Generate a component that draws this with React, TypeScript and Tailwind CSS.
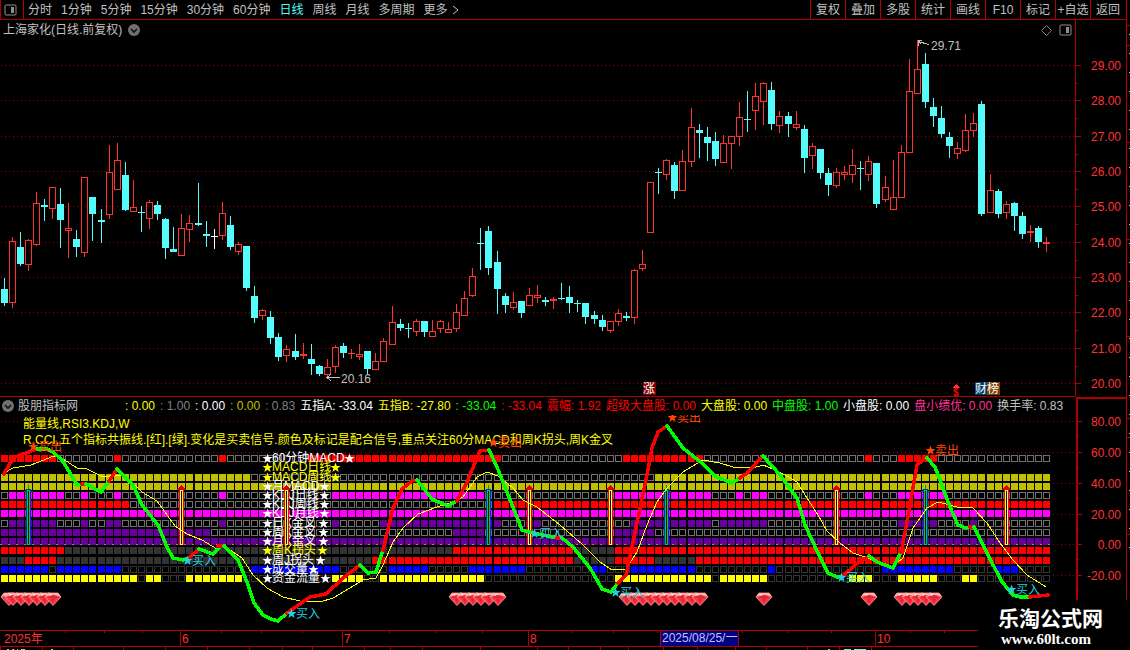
import { useState } from "react";

type Candle = [high: number, top: number, bottom: number, low: number, kind: "u" | "d" | "w"];
type Range = [from: number, to: number];
type Point = [x: number, y: number];

const LINE = "#b00000";
const UP = "#ff3232";
const DOWN = "#54fcfc";
const COUNT = 130;

const periods = ["分时", "1分钟", "5分钟", "15分钟", "30分钟", "60分钟", "日线", "周线", "月线", "多周期"];
const tools = ["复权", "叠加", "多股", "统计", "画线", "F10", "标记", "+自选", "返回"];

const candles: Candle[] = [
  [278, 289, 303, 306, "d"], [237, 241, 303, 308, "u"], [232, 247, 264, 266, "d"], [239, 240, 265, 271, "u"],
  [192, 203, 245, 246, "u"], [199, 205, 207, 221, "d"], [187, 187, 209, 219, "u"], [188, 204, 220, 248, "d"],
  [203, 228, 231, 258, "u"], [230, 239, 247, 257, "d"], [177, 177, 253, 257, "u"], [197, 197, 214, 241, "d"],
  [209, 220, 222, 243, "d"], [145, 172, 215, 219, "u"], [143, 160, 190, 190, "u"], [162, 175, 210, 211, "d"],
  [180, 207, 212, 212, "u"], [206, 212, 213, 232, "d"], [200, 202, 219, 229, "u"], [201, 205, 214, 220, "d"],
  [218, 219, 248, 259, "d"], [227, 249, 252, 252, "d"], [214, 228, 256, 256, "u"], [215, 223, 230, 242, "u"],
  [183, 223, 225, 226, "d"], [221, 234, 236, 247, "d"], [229, 236, 237, 249, "w"], [202, 213, 236, 240, "u"],
  [216, 225, 247, 250, "d"], [242, 244, 252, 255, "u"], [246, 246, 288, 291, "d"], [286, 296, 318, 323, "d"],
  [309, 310, 316, 320, "u"], [311, 317, 338, 344, "d"], [333, 337, 357, 361, "d"], [345, 349, 356, 362, "u"],
  [334, 351, 357, 360, "d"], [343, 354, 356, 359, "u"], [344, 359, 364, 375, "d"], [365, 366, 374, 376, "d"],
  [359, 367, 375, 376, "u"], [345, 347, 367, 373, "u"], [343, 346, 353, 358, "d"], [349, 353, 354, 359, "u"],
  [344, 354, 357, 360, "u"], [351, 351, 369, 374, "d"], [353, 361, 370, 370, "u"], [338, 341, 362, 362, "u"],
  [306, 322, 345, 345, "u"], [319, 324, 328, 331, "d"], [323, 328, 329, 338, "d"], [319, 321, 332, 336, "u"],
  [321, 321, 332, 337, "d"], [320, 331, 337, 337, "u"], [320, 321, 329, 333, "u"], [322, 329, 333, 333, "u"],
  [304, 312, 329, 332, "u"], [291, 298, 316, 316, "u"], [268, 276, 296, 297, "u"], [228, 243, 244, 270, "d"],
  [226, 231, 268, 275, "d"], [251, 262, 289, 314, "d"], [293, 296, 305, 313, "d"], [292, 302, 308, 310, "u"],
  [301, 301, 313, 318, "d"], [288, 295, 306, 306, "u"], [285, 295, 298, 303, "u"], [297, 300, 302, 306, "d"],
  [297, 299, 301, 309, "u"], [283, 298, 299, 300, "d"], [286, 297, 303, 313, "d"], [300, 303, 304, 312, "d"],
  [303, 303, 317, 324, "d"], [311, 315, 319, 324, "d"], [315, 320, 327, 331, "d"], [321, 321, 331, 333, "u"],
  [309, 313, 322, 326, "u"], [312, 316, 318, 321, "d"], [269, 270, 318, 324, "u"], [250, 264, 269, 271, "u"],
  [182, 182, 233, 233, "u"], [168, 172, 173, 194, "d"], [159, 160, 175, 180, "u"], [162, 165, 191, 199, "d"],
  [150, 161, 191, 191, "u"], [108, 127, 162, 167, "u"], [124, 130, 133, 158, "d"], [127, 137, 143, 161, "d"],
  [132, 141, 159, 166, "d"], [135, 143, 163, 163, "u"], [136, 136, 144, 169, "u"], [102, 117, 137, 146, "u"],
  [91, 119, 120, 132, "d"], [83, 96, 111, 130, "u"], [82, 83, 102, 125, "u"], [82, 90, 124, 130, "d"],
  [111, 116, 126, 133, "u"], [112, 116, 124, 137, "d"], [111, 124, 128, 130, "u"], [125, 129, 158, 173, "d"],
  [143, 146, 156, 169, "u"], [149, 149, 173, 179, "d"], [168, 173, 185, 196, "d"], [168, 172, 186, 188, "u"],
  [166, 172, 175, 180, "u"], [149, 165, 175, 183, "u"], [161, 168, 169, 190, "d"], [156, 161, 175, 181, "u"],
  [163, 163, 204, 208, "d"], [176, 187, 200, 202, "u"], [160, 197, 210, 210, "u"], [145, 152, 198, 198, "u"],
  [59, 91, 153, 153, "u"], [40, 69, 94, 94, "u"], [53, 64, 102, 108, "d"], [98, 107, 116, 127, "d"],
  [106, 118, 134, 138, "d"], [132, 137, 146, 158, "d"], [142, 148, 154, 159, "u"], [114, 130, 151, 152, "u"],
  [113, 123, 131, 137, "u"], [101, 104, 214, 216, "d"], [174, 190, 213, 213, "u"], [189, 191, 214, 218, "d"],
  [201, 204, 213, 219, "u"], [202, 203, 216, 231, "d"], [212, 216, 234, 239, "d"], [225, 231, 233, 242, "u"],
  [226, 228, 242, 248, "d"], [237, 242, 244, 252, "u"]
];

const priceTicks = [
  { y: 65, label: "29.00" },
  { y: 100, label: "28.00" },
  { y: 136, label: "27.00" },
  { y: 171, label: "26.00" },
  { y: 206, label: "25.00" },
  { y: 242, label: "24.00" },
  { y: 277, label: "23.00" },
  { y: 312, label: "22.00" },
  { y: 348, label: "21.00" },
  { y: 383, label: "20.00" }
];

const indexTicks = [
  { y: 421, label: "80.00" },
  { y: 452, label: "60.00" },
  { y: 483, label: "40.00" },
  { y: 514, label: "20.00" },
  { y: 544, label: "0.00" },
  { y: 575, label: "-20.00" }
];

const readings = [
  { text: ": 0.00", color: "text-[#ffff00]" },
  { text: ": 1.00", color: "text-[#808080]" },
  { text: ": 0.00", color: "text-white" },
  { text: ": 0.00", color: "text-[#c0c000]" },
  { text: ": 0.83", color: "text-[#808080]" },
  { text: "五指A: -33.04", color: "text-white" },
  { text: "五指B: -27.80", color: "text-[#ffff00]" },
  { text: ": -33.04", color: "text-[#00ff00]" },
  { text: ": -33.04", color: "text-[#ff0000]" },
  { text: "震幅: 1.92", color: "text-[#ff0000]" },
  { text: "超级大盘股: 0.00", color: "text-[#ff0000]" },
  { text: "大盘股: 0.00", color: "text-[#ffff00]" },
  { text: "中盘股: 1.00", color: "text-[#00ff00]" },
  { text: "小盘股: 0.00", color: "text-white" },
  { text: "盘小绩优: 0.00", color: "text-[#ff3399]" },
  { text: "换手率: 0.83", color: "text-[#c0c0c0]" }
];

const OFF = "#707070";
const DIM = "#333333";

// off: outline colour of an empty cell, or a fill when solid is set
const signalRows: { y: number; on: string; off: string; solid?: boolean; ranges: Range[] }[] = [
  { y: 455, on: "#ff0000", off: OFF, ranges: [[0, 6], [14, 14], [27, 27], [38, 61], [77, 86], [107, 107], [111, 115]] },
  { y: 474, on: "#c0c000", off: OFF, ranges: [[0, 30], [81, 129]] },
  { y: 483, on: "#c0c000", off: OFF, ranges: [[0, 129]] },
  { y: 492, on: "#ff00ff", off: OFF, ranges: [[1, 7], [10, 10], [14, 14], [27, 27], [41, 59], [76, 87], [91, 91], [93, 94], [107, 107], [111, 116]] },
  { y: 501, on: "#ff0000", off: OFF, ranges: [[0, 15], [61, 129]] },
  { y: 510, on: "#ff00ff", off: OFF, ranges: [[0, 129]] },
  { y: 520, on: "#660099", off: OFF, ranges: [[1, 6], [10, 10], [13, 14], [27, 27], [41, 41], [47, 61], [65, 66], [78, 87], [89, 94], [111, 115], [120, 120]] },
  { y: 529, on: "#660099", off: OFF, ranges: [[0, 25], [56, 59], [76, 80]] },
  { y: 538, on: "#660099", off: OFF, ranges: [[0, 129]] },
  { y: 547, on: "#ff0000", off: DIM, solid: true, ranges: [[0, 7], [56, 70], [76, 129]] },
  { y: 557, on: "#ff0000", off: DIM, solid: true, ranges: [[3, 6], [46, 70], [76, 80], [86, 129]] },
  { y: 566, on: "#0000ff", off: DIM, ranges: [[0, 5], [7, 14], [31, 41], [48, 52], [58, 64], [73, 74], [78, 85], [95, 95], [109, 117], [123, 125]] },
  { y: 575, on: "#ffff00", off: DIM, ranges: [[0, 16], [18, 19], [23, 29], [41, 44], [47, 59], [76, 87], [89, 94], [105, 107], [111, 115], [119, 120]] }
];

const rowLabels = [
  { y: 458, text: "60分钟MACD", end: 349, color: "#ffffff" },
  { y: 467, text: "MACD日线", end: 335, color: "#ffff00" },
  { y: 477, text: "MACD周线", end: 335, color: "#ffff00" },
  { y: 486, text: "月MACD", end: 324, color: "#ffffff" },
  { y: 495, text: "KDJ日线", end: 324, color: "#ffffff" },
  { y: 504, text: "KDJ周线", end: 324, color: "#ffffff" },
  { y: 513, text: "KDJ月线", end: 324, color: "#ffffff" },
  { y: 523, text: "日K金叉", end: 323, color: "#ffffff" },
  { y: 532, text: "周K金叉", end: 323, color: "#ffffff" },
  { y: 541, text: "月K金叉", end: 323, color: "#ffffff" },
  { y: 550, text: "周K拐头", end: 322, color: "#ffff00" },
  { y: 560, text: "周J拐头", end: 320, color: "#ffffff" },
  { y: 569, text: "成交量", end: 313, color: "#ffffff" },
  { y: 578, text: "资金流量", end: 325, color: "#ffffff" }
];

const slowLine: Point[] = [
  [4, 473], [13, 468], [31, 465], [54, 456], [63, 459], [77, 468], [85, 468], [103, 477], [117, 475], [127, 477],
  [142, 492], [157, 501], [175, 526], [187, 534], [202, 540], [217, 549], [225, 547], [233, 552], [242, 558],
  [253, 575], [267, 588], [283, 597], [300, 601], [320, 602], [333, 598], [350, 588], [363, 580], [376, 578],
  [383, 565], [393, 542], [403, 528], [418, 514], [437, 507], [450, 503], [463, 497], [477, 477], [487, 472],
  [498, 476], [513, 488], [523, 500], [537, 507], [560, 525], [583, 545], [600, 562], [612, 570], [626, 569],
  [637, 552], [647, 525], [657, 502], [667, 488], [683, 472], [703, 460], [720, 463], [733, 467], [753, 468],
  [763, 465], [773, 469], [787, 476], [797, 482], [807, 498], [818, 515], [827, 531], [840, 543], [853, 553],
  [865, 557], [876, 561], [892, 567], [903, 558], [913, 528], [927, 508], [938, 502], [957, 507], [973, 508],
  [987, 523], [1000, 543], [1013, 560], [1027, 575], [1046, 587]
];

const R = "#ff0000";
const G = "#00ff00";

const energyLine: { color: string; points: Point[] }[] = [
  { color: R, points: [[4, 474], [10, 463], [15, 457], [37, 449]] },
  { color: G, points: [[37, 449], [47, 449], [53, 452], [62, 460], [70, 473], [77, 485], [82, 484]] },
  { color: R, points: [[82, 484], [86, 484]] },
  { color: G, points: [[86, 484], [101, 492], [109, 481]] },
  { color: R, points: [[109, 481], [117, 469]] },
  { color: G, points: [[117, 469], [133, 485], [142, 505], [158, 525], [167, 547], [173, 558], [183, 560], [189, 558]] },
  { color: R, points: [[189, 558], [199, 549]] },
  { color: G, points: [[199, 549], [213, 554], [220, 547]] },
  { color: R, points: [[218, 546], [224, 546]] },
  { color: G, points: [[224, 546], [238, 560], [247, 582], [254, 603], [263, 615], [271, 619], [278, 621], [287, 613]] },
  { color: R, points: [[287, 613], [310, 597], [326, 594], [343, 578], [360, 565]] },
  { color: G, points: [[360, 565], [368, 573], [376, 572], [383, 550]] },
  { color: R, points: [[383, 550], [393, 508], [402, 489], [412, 481], [417, 480]] },
  { color: G, points: [[417, 480], [432, 499], [448, 506], [457, 501]] },
  { color: R, points: [[457, 501], [467, 482], [480, 451], [489, 450]] },
  { color: G, points: [[489, 450], [497, 467], [505, 487], [522, 530], [533, 533], [557, 538]] },
  { color: R, points: [[557, 538], [562, 538]] },
  { color: G, points: [[562, 538], [573, 547], [590, 568], [602, 589], [611, 592], [618, 583]] },
  { color: R, points: [[618, 583], [626, 575], [633, 542], [647, 475], [652, 448], [658, 432], [667, 426]] },
  { color: G, points: [[667, 426], [683, 448], [703, 464], [715, 476], [732, 483], [740, 478]] },
  { color: R, points: [[740, 478], [747, 473], [763, 456]] },
  { color: G, points: [[763, 456], [780, 475], [797, 498], [805, 525], [818, 553], [828, 573], [837, 577], [843, 576]] },
  { color: R, points: [[843, 576], [855, 565], [869, 556]] },
  { color: G, points: [[869, 556], [877, 562], [893, 568], [901, 552]] },
  { color: R, points: [[901, 552], [907, 522], [917, 465], [923, 460], [927, 458]] },
  { color: G, points: [[927, 458], [935, 467], [950, 507], [958, 525], [966, 528], [970, 527]] },
  { color: R, points: [[970, 527], [974, 527]] },
  { color: G, points: [[974, 527], [987, 553], [1002, 582], [1013, 595], [1020, 597], [1030, 597]] },
  { color: R, points: [[1030, 597], [1048, 595]] }
];

const buyArrows = [181, 286, 529, 610, 836, 1006];
const sellArrows = [28, 488, 666, 925];
const gemSlots = [1, 2, 3, 4, 5, 6, 56, 57, 58, 59, 60, 61, 77, 78, 79, 80, 81, 82, 83, 84, 85, 86, 94, 107, 111, 112, 113, 114, 115];

const sellMarks: Point[] = [[33, 446], [493, 442], [672, 417], [930, 450]];
const buyMarks: Point[] = [[187, 560], [291, 613], [534, 533], [615, 592], [841, 577], [1011, 589]];

const months = [
  { x: 180, label: "6" },
  { x: 342, label: "7" },
  { x: 528, label: "8" },
  { x: 875, label: "10" }
];
const weekTicks = [65, 104, 142, 221, 261, 302, 389, 435, 482, 571, 613, 657, 742, 787, 831, 910, 944];
const footTicks = [0, 42, 73, 123, 165, 207, 249, 282, 312, 364, 390, 422, 480, 537, 568, 600, 628, 663, 697, 735, 766, 807, 839, 871];

function slotX(i: number) {
  return Math.floor(4.07 + i * 8.082);
}

function toPath(points: Point[]) {
  return points.map(([x, y]) => `${x},${y}`).join(" ");
}

function PanelIcon() {
  return (
    <svg width="13" height="12" viewBox="0 0 13 12" aria-hidden="true">
      <rect x="1" y="1" width="11" height="10" rx="1" fill="none" stroke="#909090" />
      <rect x="7" y="3" width="3" height="6" fill="#909090" />
    </svg>
  );
}

function ChevronBadge() {
  return (
    <svg width="12" height="12" viewBox="0 0 12 12" aria-hidden="true">
      <circle cx="6" cy="6" r="6" fill="#707070" />
      <path d="M3 5l3 3 3-3" fill="none" stroke="#111" strokeWidth="1.6" />
    </svg>
  );
}

function Toolbar() {
  const [active, setActive] = useState("日线");

  return (
    <header className="flex h-5 items-stretch justify-between border-b border-[#b00000] text-[#c0c0c0]">
      <nav className="flex items-center gap-1">
        <button aria-label="侧栏" className="flex h-full w-6 items-center justify-center border-x border-[#b00000] pr-1">
          <PanelIcon />
        </button>
        <div className="flex items-center gap-[9px]">
          {periods.map((period) => (
            <button
              key={period}
              onClick={() => setActive(period)}
              className={period === active ? "text-[#54fcfc]" : "text-[#c0c0c0]"}
            >
              {period}
            </button>
          ))}
          <button className="flex items-center gap-1">
            更多
            <svg width="7" height="10" viewBox="0 0 7 10" aria-hidden="true">
              <path d="M1 1l5 4-5 4" fill="none" stroke="#c0c0c0" />
            </svg>
          </button>
        </div>
      </nav>
      <div className="flex pr-px">
        {tools.map((tool) => (
          <button key={tool} className="w-[35px] border-l border-[#b00000] text-center whitespace-nowrap">
            {tool}
          </button>
        ))}
      </div>
    </header>
  );
}

function DottedLine({ y, width }: { y: number; width: number }) {
  return <line x1="1" x2={width} y1={y + 0.5} y2={y + 0.5} stroke="#a00000" strokeDasharray="1 3" />;
}

function PriceChart() {
  return (
    <svg viewBox="0 40 1075 356" className="block h-auto w-full overflow-visible" shapeRendering="crispEdges">
      {priceTicks.map((tick) => (
        <DottedLine key={tick.y} y={tick.y} width={1075} />
      ))}
      {candles.map(([high, top, bottom, low, kind], i) => {
        const x = slotX(i);
        const color = kind === "u" ? UP : kind === "d" ? DOWN : "#ffffff";
        const hollow = kind === "u" && bottom - top > 2;

        return (
          <g key={i} fill={color}>
            <rect x={x} y={high} width="1" height={top - high} />
            <rect x={x} y={bottom} width="1" height={low - bottom} />
            {hollow ? (
              <rect x={x - 2.5} y={top + 0.5} width="6" height={bottom - top - 1} fill="none" stroke={color} />
            ) : (
              <rect x={x - 3} y={top} width="7" height={bottom - top} />
            )}
          </g>
        );
      })}
      <path d="M929 44.5l-4-1-3-1-4-1M918 46v-6h4M918 40l3 4" fill="none" stroke="#c0c0c0" />
      <text x="931" y="50" fill="#c0c0c0">29.71</text>
      <path d="M340 377.5h-12M331 374l-4 3.500 4 3.500" fill="none" stroke="#c0c0c0" />
      <text x="341" y="383" fill="#c0c0c0">20.16</text>
      <rect x="643" y="382" width="13" height="13" fill="#800000" />
      <text x="643" y="393" fill="#ffffff">涨</text>
      <path d="M956 384l-4 4h8z" fill={UP} />
      <text x="953" y="396" fill="#ff0000" fontSize="10" fontWeight="700">$</text>
      <rect x="975" y="382" width="12" height="13" fill="#003c70" />
      <rect x="987" y="382" width="13" height="13" fill="#804000" />
      <text x="975" y="393" fill="#ffffff">财榜</text>
    </svg>
  );
}

function PriceAxis() {
  return (
    <svg width="51" height="376" viewBox="1075 20 51 376" className="block shrink-0" shapeRendering="crispEdges">
      <rect x="1075" y="20" width="1" height="376" fill={LINE} />
      {priceTicks.map((tick, i) => (
        <g key={tick.label}>
          <rect x="1076" y={tick.y} width="5" height="1" fill={LINE} />
          {i < priceTicks.length - 1 && <rect x="1076" y={tick.y + 18} width="2" height="1" fill={LINE} />}
          <text x="1121" y={tick.y + 5} textAnchor="end" fill={UP}>{tick.label}</text>
        </g>
      ))}
    </svg>
  );
}

function SignalGrid() {
  return (
    <g>
      {signalRows.map((row) =>
        Array.from({ length: COUNT }, (_, i) => {
          const on = row.ranges.some(([from, to]) => i >= from && i <= to);
          const x = slotX(i) - 3;

          if (on || row.solid) {
            return <rect key={`${row.y}-${i}`} x={x} y={row.y} width="7" height="7" fill={on ? row.on : row.off} />;
          }
          return (
            <rect key={`${row.y}-${i}`} x={x + 0.5} y={row.y + 0.5} width="6" height="6" fill="#000" stroke={row.off} />
          );
        })
      )}
    </g>
  );
}

function Pole({ x, edge, core }: { x: number; edge: string; core: string }) {
  return (
    <g>
      <rect x={x - 2} y="489" width="5" height="56" fill={edge} />
      <rect x={x - 1} y="490" width="3" height="55" fill={core} />
      <rect x={x} y="491" width="1" height="53" fill="#101010" />
    </g>
  );
}

function Gem({ x }: { x: number }) {
  return (
    <g transform={`translate(${x - 7} 593)`} shapeRendering="auto">
      <path d="M3 0h10l3 4-8 8.500-8-8.500z" fill="#f43c4c" stroke="#ff9c94" strokeWidth=".8" />
      <path d="M3 0h10l3 4-3-1-5-1-5 1-3 1z" fill="#ffb0a8" />
      <path d="M4 3l4-1 4 1 1 2-5 1-5-1z" fill="#e02838" />
      <path d="M6 6h4l-2 5z" fill="#ff1830" />
      <path d="M4 1h4l-3 2z" fill="#ffe0dc" />
    </g>
  );
}

function Star({ x, y }: { x: number; y: number }) {
  return (
    <path
      d="M0-5L1.300-1.600L5-1.500L2.100.8L3.100 4.400L0 2.300L-3.100 4.400L-2.100.8L-5-1.500L-1.300-1.600z"
      transform={`translate(${x + 0.5} ${y + 0.5})`}
      shapeRendering="auto"
    />
  );
}

function TradeMark({ x, y, text }: { x: number; y: number; text: string }) {
  return (
    <g>
      <Star x={x} y={y} />
      <text x={x + 5} y={y + 5}>{text}</text>
    </g>
  );
}

function IndicatorChart() {
  return (
    <svg viewBox="0 415 1076 215" className="block h-auto w-full" shapeRendering="crispEdges">
      {indexTicks.map((tick) => (
        <DottedLine key={tick.y} y={tick.y} width={1076} />
      ))}
      <SignalGrid />
      <line x1="0" x2="1050" y1="544.5" y2="544.5" stroke="#909050" strokeDasharray="2 6" />
      <g fill="#ffff00">
        <text x="23" y="428">能量线,RSI3.KDJ,W</text>
        <text x="23" y="444">
          R,CCI,五个指标共振线.[红].[绿].变化是买卖信号.颜色及标记是配合信号,重点关注60分MACD和周K拐头,周K金叉
        </text>
      </g>
      {rowLabels.map((label) => (
        <g key={label.text} fill={label.color}>
          <Star x={267} y={label.y} />
          <text x="272" y={label.y + 4}>{label.text}</text>
          <Star x={label.end} y={label.y} />
        </g>
      ))}
      {buyArrows.map((x) => (
        <g key={x}>
          <Pole x={x} edge="#ff0000" core="#ffff40" />
          <path d={`M${x + 0.5} 485l5 5h-10z`} fill="#e00000" />
        </g>
      ))}
      {sellArrows.map((x) => (
        <g key={x}>
          <path d={`M${x - 4} 491h9l-3 4h-3z`} fill="#008000" />
          <rect x={x} y="485" width="1" height="5" fill="#00a000" />
          <Pole x={x} edge="#0020ff" core="#00d020" />
        </g>
      ))}
      <polyline points={toPath(slowLine)} fill="none" stroke="#ffff00" />
      {energyLine.map((segment, i) => (
        <polyline
          key={i}
          points={toPath(segment.points)}
          fill="none"
          stroke={segment.color}
          strokeWidth="3.5"
          strokeLinejoin="round"
          strokeLinecap="round"
        />
      ))}
      <Gem x={8} />
      {gemSlots.map((slot) => (
        <Gem key={slot} x={slotX(slot)} />
      ))}
      <g fill="#ff4500">
        {sellMarks.map(([x, y]) => (
          <TradeMark key={x} x={x} y={y} text="卖出" />
        ))}
      </g>
      <g fill="#20d0e0">
        {buyMarks.map(([x, y]) => (
          <TradeMark key={x} x={x} y={y} text="买入" />
        ))}
      </g>
    </svg>
  );
}

function IndicatorAxis() {
  return (
    <svg width="48" height="231" viewBox="1078 399 48 231" className="block" shapeRendering="crispEdges">
      {indexTicks.map((tick) => (
        <g key={tick.label}>
          <rect x="1078" y={tick.y} width="4" height="1" fill={LINE} />
          <rect x="1078" y={tick.y + 15} width="1" height="1" fill={LINE} />
          <text x="1121" y={tick.y + 5} textAnchor="end" fill={UP}>{tick.label}</text>
        </g>
      ))}
    </svg>
  );
}

function DateAxis() {
  return (
    <svg viewBox="0 630 1126 20" className="block h-auto w-full" shapeRendering="crispEdges">
      <rect x="0" y="630" width="1126" height="1" fill={LINE} />
      <rect x="0" y="646" width="1126" height="1" fill={LINE} />
      {weekTicks.map((x) => (
        <rect key={x} x={x} y="631" width="1" height="2" fill={LINE} />
      ))}
      {footTicks.map((x) => (
        <rect key={x} x={x} y="647" width="1" height="3" fill={LINE} />
      ))}
      <text x="4" y="643" fill={UP}>2025年</text>
      {months.map((month) => (
        <g key={month.x}>
          <rect x={month.x} y="631" width="1" height="15" fill={LINE} />
          <text x={month.x + 2} y="643" fill={UP}>{month.label}</text>
        </g>
      ))}
      <rect x="660.5" y="630.5" width="78" height="16" fill="#000080" stroke={LINE} />
      <text x="662" y="642" fill="#c0c0ff">2025/08/25/一</text>
      <path d="M7 649.5h2m3 0h2m3 0h1m3 0h4m26 0h2m775 0h2m14 0h4m6 0h4" stroke="#c0c0c0" />
      <path d="M845 649.5h6m3 0h12" stroke={DOWN} />
    </svg>
  );
}

function EdgeRuler() {
  return (
    <svg width="3" height="600" viewBox="0 0 3 600" className="block shrink-0" shapeRendering="crispEdges">
      {[25, 45, 142, 239, 336, 418, 437, 534].map((y) => (
        <rect key={y} x="0" y={y} width="3" height="1" fill={LINE} />
      ))}
      {Array.from({ length: 28 }, (_, i) => (
        <rect key={i} x="2" y={34 + i * 19} width="1" height="1" fill="#c0c0c0" />
      ))}
    </svg>
  );
}

export default function App() {
  return (
    <div className="relative flex min-h-screen bg-black font-['Liberation_Sans','Noto_Sans_CJK_SC',sans-serif] text-[12px] leading-4">
      <div className="min-w-0 flex-1 border-r border-[#b00000]">
        <Toolbar />
        <main>
          <section className="flex">
            <div className="min-w-0 flex-1">
              <div className="flex h-5 items-center justify-between px-[3px] text-[#c0c0c0]">
                <h1 className="flex items-center gap-1.5">
                  上海家化(日线.前复权)
                  <ChevronBadge />
                </h1>
                <div className="flex items-center gap-[7px]">
                  <svg width="11" height="11" viewBox="0 0 11 11" aria-hidden="true">
                    <path d="M5.500 .5l5 5-5 5-5-5z" fill="none" stroke="#808080" />
                  </svg>
                  <PanelIcon />
                </div>
              </div>
              <PriceChart />
            </div>
            <PriceAxis />
          </section>
          <section className="flex">
            <div className="min-w-0 flex-1 border-t border-[#b00000]">
              <div className="flex h-[18px] items-center pl-[2px] whitespace-nowrap">
                <h2 className="flex w-[123px] shrink-0 items-center gap-1 text-[#c0c0c0]">
                  <ChevronBadge />
                  股朋指标网
                </h2>
                <div className="flex gap-[5px]">
                  {readings.map((reading, i) => (
                    <span key={i} className={reading.color}>{reading.text}</span>
                  ))}
                </div>
              </div>
              <IndicatorChart />
            </div>
            <div className="mt-px w-[50px] shrink-0 border-t-2 border-l-2 border-[#b00000]">
              <IndicatorAxis />
            </div>
          </section>
          <DateAxis />
        </main>
      </div>
      <EdgeRuler />
      <footer className="absolute right-0 bottom-0 flex h-[50px] w-[152px] flex-col bg-black pt-2 pl-5 text-white">
        <strong className="text-[21px] leading-[22px] font-bold">乐淘公式网</strong>
        <a href="#" className="pl-[3px] font-['Liberation_Serif',serif] text-[15px] leading-[18px] font-bold">
          www.60lt.com
        </a>
      </footer>
    </div>
  );
}
